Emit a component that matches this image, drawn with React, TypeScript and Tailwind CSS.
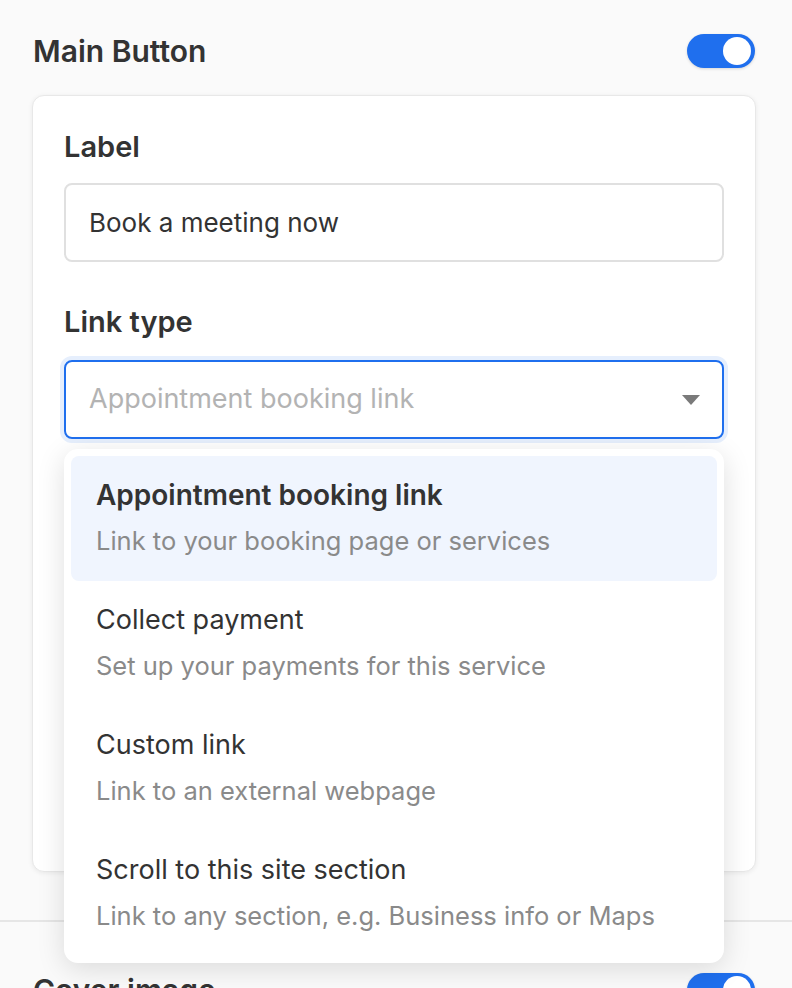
import React from "react";

function Toggle() {
  return (
    <div className="w-[68px] h-[34px] rounded-full bg-[#1f6fee] flex items-center justify-end pr-[4px] shadow-[0_1px_3px_rgba(0,0,0,0.15)]">
      <div className="w-[28px] h-[28px] rounded-full bg-white" />
    </div>
  );
}

const options = [
  { title: "Appointment booking link", sub: "Link to your booking page or services", active: true },
  { title: "Collect payment", sub: "Set up your payments for this service" },
  { title: "Custom link", sub: "Link to an external webpage" },
  { title: "Scroll to this site section", sub: "Link to any section, e.g. Business info or Maps" },
];

export default function App() {
  return (
    <div
      className="w-[792px] h-[988px] overflow-hidden bg-[#fafafa] text-[#333333]"
      style={{ fontFamily: "Inter, 'Noto Sans', sans-serif" }}
    >
      <div className="pl-[33px] pr-[37px] pt-[34px] flex items-center justify-between">
        <div className="text-[30px] font-semibold leading-[34px]">Main Button</div>
        <Toggle />
      </div>

      <div className="ml-[32px] mr-[36px] mt-[27px] h-[777px] rounded-[12px] bg-white border border-[#e8e8e8] shadow-[0_1px_5px_rgba(0,0,0,0.07)] px-[31px] pt-[34px]">
        <div className="text-[29px] font-semibold leading-[34px]">Label</div>
        <div className="mt-[19px] h-[79px] rounded-[8px] border-2 border-[#e0e0e0] flex items-center px-[23px] text-[26px]">
          Book a meeting now
        </div>

        <div className="mt-[43px] text-[29px] font-semibold leading-[34px]">Link type</div>
        <div className="relative mt-[21px]">
          <div className="h-[79px] rounded-[8px] border-2 border-[#1f6fee] ring-4 ring-[#e6effd] flex items-center justify-between pl-[23px] pr-[22px] text-[27px] text-[#b3b3b3]">
            <span>Appointment booking link</span>
            <svg width="18" height="10" viewBox="0 0 18 10">
              <path d="M0 0 L18 0 L9 10 Z" fill="#7a7a7a" />
            </svg>
          </div>

          <div className="absolute left-0 right-0 top-[89px] z-10 rounded-[14px] bg-white shadow-[0_6px_28px_rgba(0,0,0,0.13)] p-[7px] h-[514px]">
            {options.map((o) => (
              <div
                key={o.title}
                className={
                  "h-[125px] rounded-[8px] px-[25px] pt-[22px] " +
                  (o.active ? "bg-[#f0f5fe]" : "")
                }
              >
                <div className={"leading-[34px] " + (o.active ? "text-[28px] font-semibold" : "text-[27px] font-normal")}>
                  {o.title}
                </div>
                <div className="mt-[13px] text-[25.5px] leading-[32px] text-[#8a8a8a]">{o.sub}</div>
              </div>
            ))}
          </div>
        </div>
      </div>

      <div className="mt-[48px] border-t-2 border-[#e6e6e6]" />

      <div className="pl-[33px] pr-[37px] pt-[51px] flex items-center justify-between">
        <div className="text-[30px] font-semibold leading-[34px]">Cover image</div>
        <Toggle />
      </div>
    </div>
  );
}
